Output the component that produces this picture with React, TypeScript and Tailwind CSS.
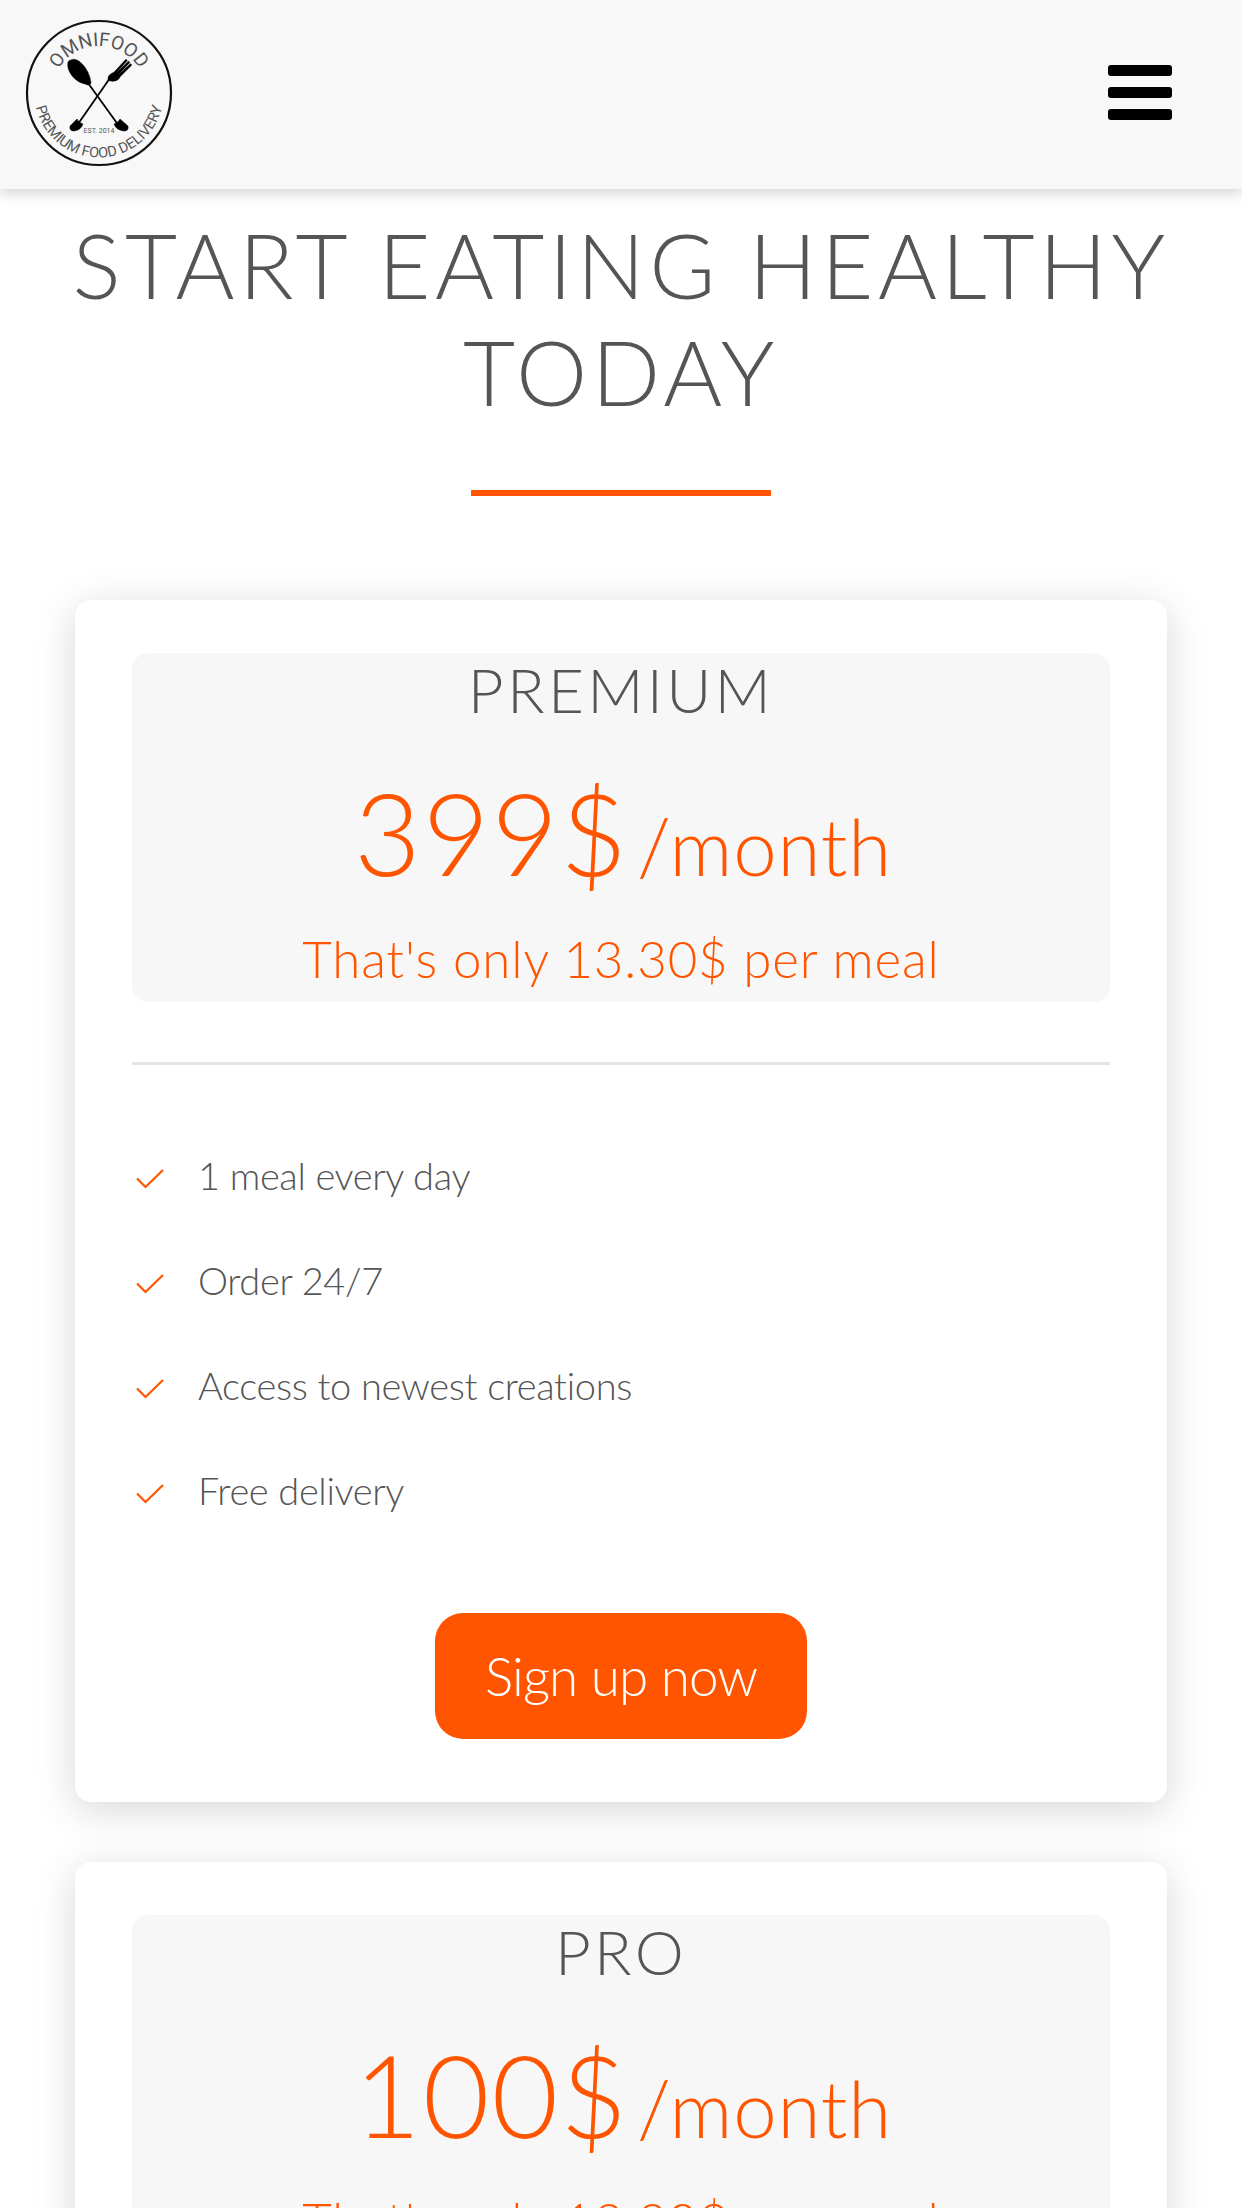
import React from "react";

const features = ["1 meal every day", "Order 24/7", "Access to newest creations", "Free delivery"];

const Logo = () => (
  <svg viewBox="0 0 150 150" className="h-[150px] w-[150px]">
    <defs>
      <path id="arcTop" d="M28 75 A47 47 0 0 1 122 75" />
      <path id="arcBottom" d="M10.5 75 A64.5 64.5 0 0 0 139.5 75" />
    </defs>
    <circle cx="75" cy="75" r="72" fill="none" stroke="#111" strokeWidth="2.2" />
    <text fontFamily="'Liberation Sans Narrow', Roboto, sans-serif" fontSize="19" fill="#555" textAnchor="middle">
      <textPath href="#arcTop" startOffset="50%">
        OMNIFOOD
      </textPath>
    </text>
    <text fontFamily="'Liberation Sans Narrow', Roboto, sans-serif" fontSize="14.5" fill="#555" textAnchor="middle">
      <textPath href="#arcBottom" startOffset="50%">
        PREMIUM FOOD DELIVERY
      </textPath>
    </text>
    <text x="75" y="115" fontFamily="'Liberation Sans Narrow', Roboto, sans-serif" fontSize="7" fill="#555" textAnchor="middle">
      EST. 2014
    </text>
    <g fill="#000" stroke="#000">
      <path d="M64 65 L95 108" strokeWidth="1.8" />
      <path d="M90 106 Q94 105 96 101 L104 108 Q105 113 100 113 Q92 112 90 106Z" strokeWidth="0.5" />
      <path d="M47 42 C54 38 66 52 67 65 C66 68 63 67 61 66 C50 64 42 52 44 44 Q45 42 47 42Z" strokeWidth="0.5" />
      <path d="M86 60 L54 106" strokeWidth="1.8" />
      <path d="M59 106 Q55 105 53 101 L46 108 Q45 113 50 113 Q57 112 59 106Z" strokeWidth="0.5" />
      <path d="M84 62 C83 57 88 55 90 54 L102 41 L103.5 42.5 L92 55 L104.5 43 L106 44.5 L94 57 L106.5 45.5 L108 47 L96 59 C95 63 88 65 84 62Z" strokeWidth="0.2" />
    </g>
  </svg>
);

const Check = () => (
  <svg viewBox="0 0 28 20" className="h-[20px] w-[28px] shrink-0" fill="none" stroke="#ff5500" strokeWidth="2.2">
    <path d="M1 9.5 L9.5 18 L27 1" />
  </svg>
);

const PlanCard = ({ name, price, perMeal }: { name: string; price: string; perMeal: string }) => (
  <div className="mx-[75px] mb-[60px] rounded-[16px] bg-white px-[57px] pt-[53px] pb-[63px] shadow-[0_8px_40px_rgba(0,0,0,0.16)]">
    <div className="flex h-[349px] flex-col items-center rounded-[16px] bg-[#f7f7f7]">
      <div className="h-[72px] text-[62px] leading-[72px] font-light tracking-[3.3px] text-[#555]">{name}</div>
      <div className="mt-[36px] flex h-[140px] items-baseline pl-[4px] text-[#ff5500]">
        <span className="text-[115px] leading-[140px] font-light tracking-[2px]">{price}</span>
        <span className="ml-[8px] text-[78px] font-light tracking-[0.8px]">/month</span>
      </div>
      <div className="mt-[24px] text-[51px] leading-[68px] font-light tracking-[0.9px] text-[#ff5500]">{perMeal}</div>
    </div>
    <div className="mt-[60px] h-[3px] bg-[#e4e4e4]" />
    <ul className="mt-[87px] flex flex-col gap-[59px]">
      {features.map((f) => (
        <li key={f} className="flex h-[46px] items-center text-[38px] leading-[46px] font-light tracking-[-0.35px] text-[#555]">
          <span className="mr-[34px] flex pt-[8px] pl-[4px]">
            <Check />
          </span>
          {f}
        </li>
      ))}
    </ul>
    <div className="mt-[100px] flex justify-center">
      <div className="flex h-[126px] w-[372px] items-center justify-center rounded-[28px] bg-[#ff5500] text-[53px] font-light tracking-[-0.9px] text-white">
        Sign up now
      </div>
    </div>
  </div>
);

export default function App() {
  return (
    <div className="h-[2208px] overflow-hidden bg-white font-['Lato',sans-serif]">
      <header className="flex h-[189px] items-center justify-between bg-[#f8f8f8] pr-[70px] pb-[4px] pl-[24px] shadow-[0_4px_14px_rgba(0,0,0,0.18)]">
        <Logo />
        <div className="flex w-[64px] flex-col gap-[11px]">
          <div className="h-[11px] rounded-[3px] bg-black" />
          <div className="h-[11px] rounded-[3px] bg-black" />
          <div className="h-[11px] rounded-[3px] bg-black" />
        </div>
      </header>
      <h1 className="mx-auto mt-[22px] w-[1140px] text-center text-[90px] leading-[107px] font-light tracking-[4.5px] text-[#555]">
        START EATING HEALTHY TODAY
      </h1>
      <div className="mx-auto mt-[65px] mb-[104px] h-[6px] w-[300px] bg-[#ff5500]" />
      <PlanCard name="PREMIUM" price="399$" perMeal="That's only 13.30$ per meal" />
      <PlanCard name="PRO" price="100$" perMeal="That's only 13.30$ per meal" />
    </div>
  );
}
